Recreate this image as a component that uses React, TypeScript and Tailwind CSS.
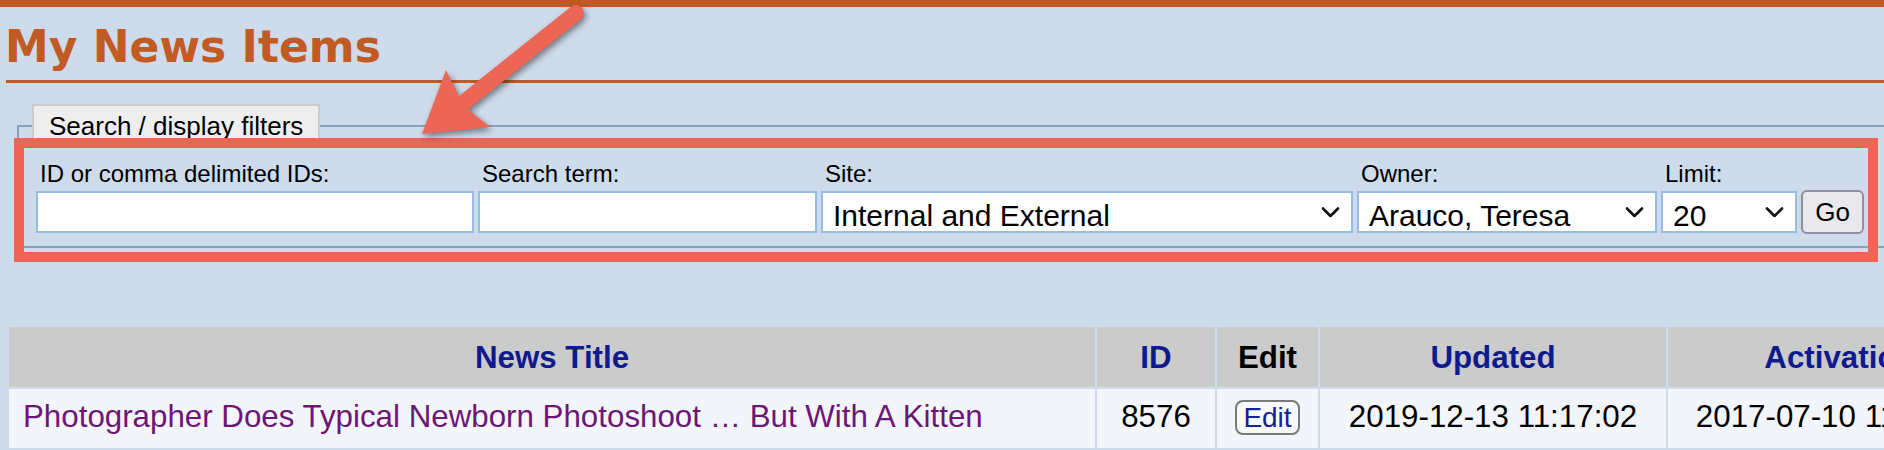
import React from 'react'

// Annotated screenshot of the "My News Items" admin page:
// filter fieldset + start of the results table, with a red call-out on top.

const SANS = "font-['Liberation_Sans',Arial,Helvetica,sans-serif]"

const COLUMNS = [
  { key: 'title', label: 'News Title', link: true },
  { key: 'id', label: 'ID', link: true },
  { key: 'edit', label: 'Edit', link: false },
  { key: 'updated', label: 'Updated', link: true },
  { key: 'activation', label: 'Activation', link: true },
  { key: 'expires', label: 'Expires', link: true },
]

const ROW = {
  title: 'Photographer Does Typical Newborn Photoshoot … But With A Kitten',
  id: '8576',
  updated: '2019-12-13 11:17:02',
  activation: '2017-07-10 11:02:45',
  expires: '—',
}

function Chevron() {
  return (
    <svg
      className="pointer-events-none absolute right-[13px] top-1/2 -translate-y-1/2"
      width="19"
      height="11"
      viewBox="0 0 19 11"
    >
      <path d="M2 2l7.5 7.5L17 2" fill="none" stroke="#111" strokeWidth="2.6" strokeLinecap="round" strokeLinejoin="round" />
    </svg>
  )
}

function Dropdown({ value, options }: { value: string; options: string[] }) {
  return (
    <div className="relative h-[42px]">
      <select
        defaultValue={value}
        className={`${SANS} h-full w-full appearance-none border-2 border-[#94bce4] bg-white pl-[10px] pr-[40px] text-[30px] text-black outline-none`}
      >
        {options.map(option => (
          <option key={option}>{option}</option>
        ))}
      </select>
      <Chevron />
    </div>
  )
}

function Field({ label, width, children }: { label: string; width: string; children: React.ReactNode }) {
  return (
    <div className={`flex flex-col ${width}`}>
      <label className="mb-[3px] pl-[4px] text-[24px] leading-[28px] text-black">{label}</label>
      {children}
    </div>
  )
}

function Filters() {
  return (
    <fieldset className="ml-[17px] mt-[21px] w-[2000px] border-2 border-[#8aa1bd] pb-[13px] pl-[17px] pt-[12px]">
      <legend className="-ml-[4px] box-border h-[44px] border-2 border-[#c9cbcc] bg-[#eeeeee] px-[15px] text-[26px] leading-[40px] text-black">
        Search / display filters
      </legend>
      <div className="flex items-end gap-[4px]">
        <Field label="ID or comma delimited IDs:" width="w-[438px]">
          <input type="text" className="h-[42px] w-full border-2 border-[#94bce4] bg-white outline-none" />
        </Field>
        <Field label="Search term:" width="w-[339px]">
          <input type="text" className="h-[42px] w-full border-2 border-[#94bce4] bg-white outline-none" />
        </Field>
        <Field label="Site:" width="w-[532px]">
          <Dropdown value="Internal and External" options={['Internal and External', 'Internal', 'External']} />
        </Field>
        <Field label="Owner:" width="w-[300px]">
          <Dropdown value="Arauco, Teresa" options={['Arauco, Teresa', 'Anyone']} />
        </Field>
        <Field label="Limit:" width="w-[136px]">
          <Dropdown value="20" options={['10', '20', '50', '100']} />
        </Field>
        <button
          type="button"
          className="mb-[-1px] h-[44px] w-[63px] rounded-[6px] border-2 border-[#8f8f9d] bg-[#e9e9ed] text-[26px] text-black"
        >
          Go
        </button>
      </div>
    </fieldset>
  )
}

function ResultsTable() {
  return (
    <div className="ml-[9px] mt-[79px] grid w-max grid-cols-[1086px_118px_101px_346px_344px_300px] gap-[2px] text-[31.3px]">
      {COLUMNS.map(col => (
        <div
          key={col.key}
          className={`flex h-[60px] items-center justify-center bg-[#cbcbcb] pt-[2px] font-bold ${col.link ? 'text-[#0e1a8e]' : 'text-black'}`}
        >
          {col.label}
        </div>
      ))}
      <div className="flex h-[59px] items-center bg-[#f2f5fa] pb-[2px] pl-[14px] text-[#6e1676]">{ROW.title}</div>
      <div className="flex h-[59px] items-center justify-center bg-[#f2f5fa] pb-[2px] text-black">{ROW.id}</div>
      <div className="flex h-[59px] items-center justify-center bg-[#f2f5fa] pb-[2px]">
        <button
          type="button"
          className="h-[35px] w-[65px] rounded-[8px] border-2 border-[#7a7a7a] bg-[#f8f9fb] text-[28px] leading-[28px] text-[#14229a]"
        >
          Edit
        </button>
      </div>
      <div className="flex h-[59px] items-center justify-center bg-[#f2f5fa] pb-[2px] text-black">{ROW.updated}</div>
      <div className="flex h-[59px] items-center justify-center bg-[#f2f5fa] pb-[2px] text-black">{ROW.activation}</div>
      <div className="flex h-[59px] items-center justify-center bg-[#f2f5fa] pb-[2px] text-black">{ROW.expires}</div>
    </div>
  )
}

function CallOut() {
  return (
    <>
      <div className="pointer-events-none absolute left-[14px] top-[138px] h-[124px] w-[1864px] border-[10px] border-[#ed6555]" />
      <svg
        className="pointer-events-none absolute left-0 top-0 drop-shadow-[2px_3px_3px_rgba(0,0,0,0.45)]"
        width="700"
        height="170"
        viewBox="0 0 700 170"
      >
        <line x1="576" y1="13" x2="462" y2="104" stroke="#ed6555" strokeWidth="16" strokeLinecap="round" />
        <polygon points="422,134 446,70 459,96 470,111 490,127" fill="#ed6555" />
      </svg>
    </>
  )
}

export default function App() {
  return (
    <div className={`${SANS} relative h-[450px] w-[1884px] overflow-hidden bg-[#cedbea]`}>
      <div className="h-[7px] bg-[#c05a22]" />
      <h1 className="mt-[18px] pl-[5px] font-['DejaVu_Sans',Verdana,sans-serif] text-[44px] font-bold leading-[44px] text-[#c15a23]">
        My News Items
      </h1>
      <div className="ml-[6px] mt-[11px] h-[3px] bg-[#c15a23]" />
      <Filters />
      <ResultsTable />
      <CallOut />
    </div>
  )
}
